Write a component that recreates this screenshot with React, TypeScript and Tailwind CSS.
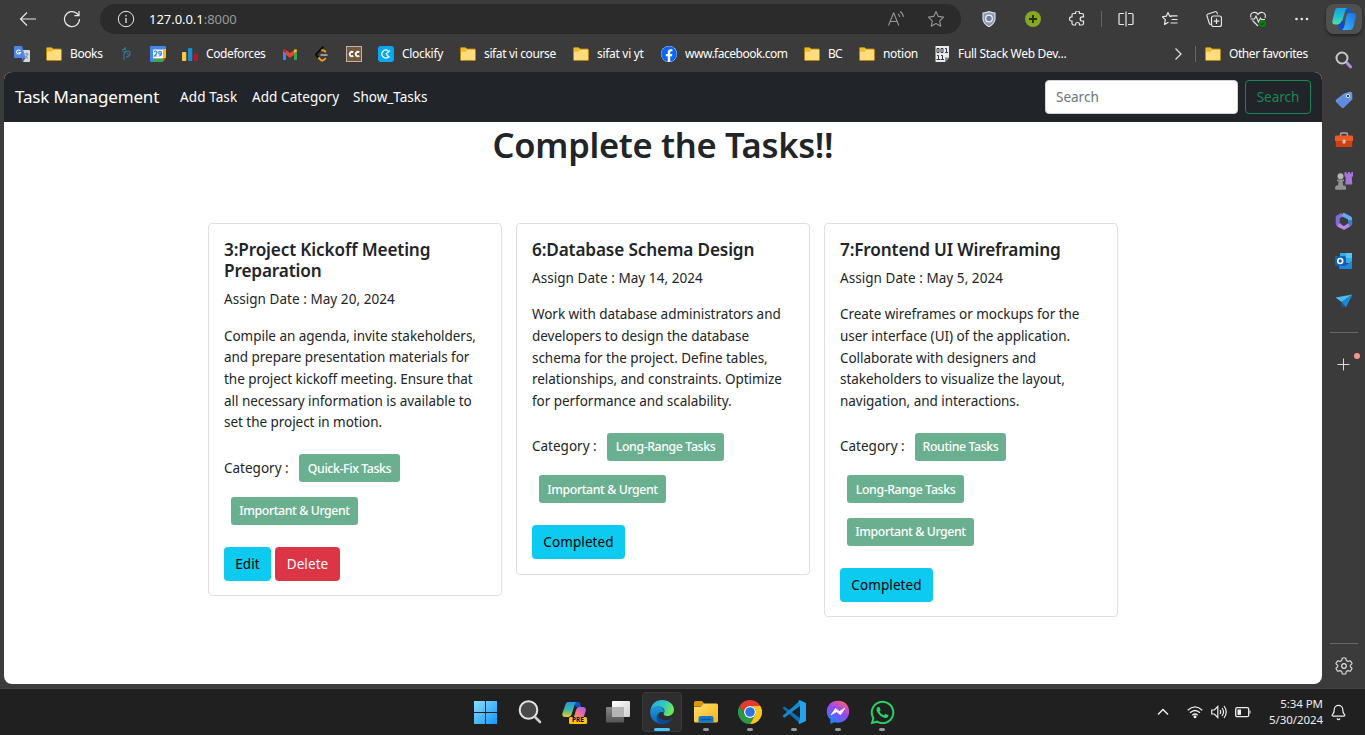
import type { ReactNode } from "react";
import { Bell } from "lucide-react";
import { FaFacebook, FaWhatsapp } from "react-icons/fa";

const Svg = ({ s = 16, v = "0 0 16 16", c = "", children }: { s?: number; v?: string; c?: string; children: ReactNode }) => (
  <svg width={s} height={s} viewBox={v} fill="none" className={`shrink-0 ${c}`}>{children}</svg>
);

/* ---------- bookmark icons ---------- */
const Folder = () => (
  <Svg>
    <path d="M.5 2.500q0-1 1-1h4l1.500 1.500h7.500q1 0 1 1v9.500q0 1-1 1h-13q-1 0-1-1z" fill="#ffdc7c" stroke="#b8860b" />
    <path d="M1 2h4.500l1 1-1.500 1.500H1z" fill="#f3bd22" />
    <path d="M1 5h4.500l1.500-1.500" stroke="#c6951a" strokeWidth=".7" />
  </Svg>
);
const Translate = () => (
  <Svg>
    <path d="M7 4h8q1 0 1 1v10q0 1-1 1H9z" fill="#d5d8dc" />
    <path d="M1 0h7l3.500 12H1q-1 0-1-1V1q0-1 1-1z" fill="#4d86ea" />
    <path d="M8.500 12h3L9 16z" fill="#2f5fc0" />
    <path d="M6.300 5A2 2 0 1 0 6.500 6.500H4.600" stroke="#fff" strokeWidth="1.100" />
    <path d="M10.500 8h4M12.500 7v1M13.800 8.200q-1 3-3 4M11.200 9.500q1 2 3 3" stroke="#78848f" strokeWidth=".9" />
  </Svg>
);
const Phitron = () => (
  <Svg>
    <path d="M4.300 4.500l3-2.500v2M4.500 6h3M6 7.500V14M6 8q2-3 4.500-3Q12.500 5.300 12 8q-.8 2.800-4 3M8 4.500v2M9.700 7v1.500" stroke="#32789a" strokeWidth="1.200" />
  </Svg>
);
const Calendar = () => (
  <Svg>
    <path d="M0 1q0-1 1-1h14q1 0 1 1v3H0z" fill="#4285f4" />
    <path d="M0 3h3v13H1q-1 0-1-1z" fill="#4285f4" />
    <path d="M13 3h3v9h-3z" fill="#fbbc04" />
    <path d="M3 12.500h10V16H3z" fill="#34a853" />
    <path d="M13 12h3l-3 4z" fill="#ea4335" />
    <path d="M3 3.500h10v9H3z" fill="#fff" />
    <path d="M4.200 6.200q.3-1 1.500-1t1.300 1.200q0 .8-2.700 3.600h3" stroke="#4285f4" strokeWidth="1.200" />
    <circle cx="10" cy="6.700" r="1.400" stroke="#4285f4" strokeWidth="1.200" />
    <path d="M11.500 6.500q.4 3.700-2.700 3.500" stroke="#4285f4" strokeWidth="1.200" />
  </Svg>
);
const Codeforces = () => (
  <Svg>
    <rect x="0" y="6" width="4.300" height="9" rx="1" fill="#f6c846" />
    <rect x="6" y="2" width="4.300" height="13" rx="1" fill="#1c8ccd" />
    <rect x="11.800" y="7.500" width="4.200" height="7.500" rx="1" fill="#b8142a" />
  </Svg>
);
const Gmail = () => (
  <Svg>
    <path d="M1 3.500L4 4l4 3.200L12 4l3-.5V7l-7 5-7-5z" fill="#ea4335" />
    <path d="M4 9l4 3 4-3v5H4z" fill="#3b3b3b" />
    <path d="M1 5L4 7.200V14H2q-1 0-1-1z" fill="#4285f4" />
    <path d="M15 5l-3 2.200V14h2q1 0 1-1z" fill="#34a853" />
    <path d="M12 3.800q3-1.800 3 1.200L12 7.200z" fill="#fbbc04" />
    <path d="M4 3.800Q1 2 1 5L4 7.200z" fill="#c5221f" />
  </Svg>
);
const Leetcode = () => (
  <Svg>
    <path d="M9.500.8L2.800 7.500q-1.200 1.200 0 2.500l2 2.200" stroke="#0c0c0c" strokeWidth="2" />
    <path d="M11.800 6L9.800 4.500Q8.600 3.600 7.300 4.800M4.400 11.500l2.500 2.600q1.300 1.100 2.700 0l2.200-2" stroke="#f6a119" strokeWidth="1.900" />
    <path d="M6.500 9h7" stroke="#aaa" strokeWidth="1.700" />
  </Svg>
);
const CodeChef = () => (
  <Svg>
    <rect x=".5" y=".5" width="15" height="15" fill="#76583f" stroke="#c0b2a6" />
    <path d="M7.300 6.300a2.200 2.200 0 1 0 0 3.500M13.300 6.300a2.200 2.200 0 1 0 0 3.500" stroke="#fff" strokeWidth="1.800" />
  </Svg>
);
const Clockify = () => (
  <Svg>
    <rect width="16" height="16" rx="3" fill="#03a9f4" />
    <path d="M10.200 4.700a4 4 0 1 0 0 6.600M8 8l3.700-3.500M8.500 8.500l3 3" stroke="#fff" strokeWidth="1.300" />
  </Svg>
);
const Facebook = () => (
  <span className="flex size-4 items-center justify-center rounded-full bg-white"><FaFacebook size={16} color="#0866ff" /></span>
);
const BinaryDoc = () => (
  <Svg>
    <path d="M1.500 0H15v11.500L11 16H1.500z" fill="#e8eaec" />
    <path d="M11 16v-4.500h4z" fill="#7d8790" />
    <path d="M3 2.500h2v4H3zM7 2.500h2v4H7zM11 2.500h1.500v4M11 6.500h3M3 9.500h1.500v4M2.500 13.500h3.500M7 9.500h1.500v4M6.500 13.500H10" stroke="#343a40" strokeWidth="1" />
  </Svg>
);

const bookmarks: { w: string; icon: ReactNode; label?: string; t?: string }[] = [
  { w: "w-8", icon: <Translate /> },
  { w: "w-[72px]", icon: <Folder />, label: "Books", t: "tracking-[-0.4px]" },
  { w: "w-8", icon: <Phitron /> },
  { w: "w-8", icon: <Calendar /> },
  { w: "w-[100px]", icon: <Codeforces />, label: "Codeforces", t: "tracking-[-0.4px]" },
  { w: "w-8", icon: <Gmail /> },
  { w: "w-8", icon: <Leetcode /> },
  { w: "w-8", icon: <CodeChef /> },
  { w: "w-[82px]", icon: <Clockify />, label: "Clockify" },
  { w: "w-[113px]", icon: <Folder />, label: "sifat vi course", t: "tracking-[-0.37px]" },
  { w: "w-[88px]", icon: <Folder />, label: "sifat vi yt" },
  { w: "w-[143px]", icon: <Facebook />, label: "www.facebook.com", t: "tracking-[-0.48px]" },
  { w: "w-[55px]", icon: <Folder />, label: "BC", t: "tracking-[-0.7px]" },
  { w: "w-[75px]", icon: <Folder />, label: "notion" },
  { w: "w-[150px]", icon: <BinaryDoc />, label: "Full Stack Web Dev..." },
];

/* ---------- browser toolbar ---------- */
const Slot = ({ children, c = "w-11" }: { children: ReactNode; c?: string }) => (
  <div className={`flex shrink-0 items-center justify-center ${c}`}>{children}</div>
);

const CopilotMark = () => (
  <Svg s={24} v="0 0 24 24">
    <defs>
      <linearGradient id="cpA" x1="0" y1="0" x2="0" y2="1"><stop stopColor="#1e9ee0" /><stop offset=".5" stopColor="#20c0d5" /><stop offset="1" stopColor="#59dfa0" /></linearGradient>
      <linearGradient id="cpB" x1="1" y1="0" x2="0" y2="1"><stop stopColor="#1b6fe0" /><stop offset="1" stopColor="#38b8fb" /></linearGradient>
    </defs>
    <path d="M13 1h3q2.500 0 3 3l.6 2h-5z" fill="#1457c9" />
    <path d="M5 1h10q-1.500 1-2.500 5L10.500 13q-1 4.500-4 4.500H3q-3.500 0-2.500-4l2-8.500Q3.500 1 5 1z" fill="url(#cpA)" />
    <path d="M6 17.500q2.800-.5 3.500-3.500l3 0-1 9H9q-2 0-2.500-3z" fill="#1247d0" />
    <path d="M17 6h4q3.500 0 2.700 4l-2 8.500q-1 4.500-4 4.500H10q2-1 2.800-5l1.400-8Q15 6 17 6z" fill="url(#cpB)" />
  </Svg>
);

const Toolbar = () => (
  <div className="flex h-[38px] shrink-0 text-[#e8e8e8]">
    <div className="flex h-[37px] w-[100px] shrink-0 items-center pl-1.5">
      <Slot>
        <Svg s={18} v="0 0 18 18"><path d="M17 9H1.500M8 2.500L1.500 9 8 15.500" stroke="currentColor" strokeWidth="1.200" /></Svg>
      </Slot>
      <Slot>
        <Svg s={18} v="0 0 18 18"><path d="M16.500 9A7.500 7.500 0 1 1 14 3.500l2 2M16 1v4.700h-4.600" stroke="currentColor" strokeWidth="1.200" /></Svg>
      </Slot>
    </div>
    <div className="mt-1 flex h-[30px] w-[861px] shrink-0 items-center rounded-full bg-[#2b2b2b] pl-[17px] pr-[14px]">
      <Svg s={18} v="0 0 18 18"><circle cx="9" cy="9" r="7.700" stroke="currentColor" /><path d="M9 8v5M9 5v1.500" stroke="currentColor" strokeWidth="1.300" /></Svg>
      <span className="ml-3.5 flex-1 text-[13px] leading-5 tracking-[-0.04px] text-[#999]"><span className="text-white">127.0.0.1</span>:8000</span>
      <Svg s={18} v="0 0 18 18" c="mr-[22px] text-[#969696]">
        <path d="M1.500 15.500L6.500 3h.3l5 12.500M3.500 11.500H10M11 4q1.600 1 1.700 3M13 1.500q3 1.500 3.300 5.500" stroke="currentColor" strokeWidth="1.100" />
      </Svg>
      <Svg s={18} v="0 0 18 18" c="mr-[2px] text-[#969696]">
        <path d="M9 1.500l2.300 4.900 5.300.7-3.900 3.700 1 5.400L9 13.600l-4.700 2.600 1-5.400L1.400 7.100l5.300-.7z" stroke="currentColor" strokeWidth="1.100" strokeLinejoin="round" />
      </Svg>
    </div>
    <div className="flex h-[37px] shrink-0 items-center pl-1.5">
      <Slot>
        <Svg><path d="M8 .5Q11 2 14 2v6.500Q13 13 8 15.700 3 13 2 8.500V2Q5 2 8 .5z" fill="#8798b5" stroke="#dfe5ef" strokeWidth="1.100" /><circle cx="8" cy="7.500" r="3.300" fill="#6d7c9b" stroke="#eef2f8" strokeWidth="1.300" /></Svg>
      </Slot>
      <Slot>
        <Svg><circle cx="8" cy="8" r="8" fill="#86a81e" /><path d="M8 4v8M4 8h8" stroke="#27300c" strokeWidth="2" /></Svg>
      </Slot>
      <Slot>
        <Svg><path d="M4.500 2.500h2V2a2 2 0 0 1 4 0v.5h2.500q1.500 0 1.500 1.500v1.800h-1.200a2.100 2.100 0 0 0 0 4.200h1.200v2.500q0 1.500-1.500 1.500h-2.500v-.5a2 2 0 0 0-4 0v.5h-2Q3 14 3 12.500V10h-.5a2.100 2.100 0 0 1 0-4.200H3V4q0-1.500 1.500-1.500z" stroke="currentColor" strokeWidth="1.200" /></Svg>
      </Slot>
      <div className="ml-[2px] h-4 w-px bg-[#666]" />
      <Slot c="ml-[2px] w-11">
        <Svg><path d="M6 2.500H2q-1 0-1 1v9q0 1 1 1h4M10 2.500h4q1 0 1 1v9q0 1-1 1h-4M8 .5v15" stroke="currentColor" strokeWidth="1.200" /></Svg>
      </Slot>
      <Slot>
        <Svg><path d="M9.500 5.600L7.700 5.200 6 1.500 4.300 5.200l-4 .6 3 2.800-.8 4.800L6.500 11.200M8.500 4.800h7M9.500 8.500h6M8.500 12h7" stroke="currentColor" strokeWidth="1.200" strokeLinejoin="round" /></Svg>
      </Slot>
      <Slot>
        <Svg><path d="M5.500 13.500L3.500 13 1 5Q.6 3.500 2 3L9 .7q1.500-.5 2 1l.5 1.600" stroke="currentColor" strokeWidth="1.100" /><rect x="5.500" y="5" width="10" height="10.500" rx="2" stroke="currentColor" strokeWidth="1.200" /><path d="M10.500 7.500v5.500M7.700 10.200h5.600" stroke="currentColor" strokeWidth="1.200" /></Svg>
      </Slot>
      <Slot>
        <Svg><path d="M1 6.500Q-.3 2.300 3.500 1.500 6.500 1 8 3.500 9.500 1 12.500 1.500 16.300 2.300 15 7M2.500 9.500L8 15M.5 8h4L6 5l2.500 6 2-4 1 1.500H15" stroke="currentColor" strokeWidth="1.100" /><circle cx="12.500" cy="12.500" r="3.500" fill="#107c10" /><path d="M10.800 12.600l1.300 1.200 2-2.400" stroke="#063a06" strokeWidth=".9" /></Svg>
      </Slot>
      <Slot>
        <Svg><circle cx="2.500" cy="8" r="1.300" fill="currentColor" /><circle cx="7.800" cy="8" r="1.300" fill="currentColor" /><circle cx="13" cy="8" r="1.300" fill="currentColor" /></Svg>
      </Slot>
    </div>
  </div>
);

const Bookmarks = () => (
  <div className="flex h-[34px] shrink-0 items-center pb-[2px] pl-3.5 text-[12px] leading-4 tracking-[-0.3px] text-white">
    {bookmarks.map((b, i) => (
      <div key={i} className={`flex shrink-0 items-center gap-2 whitespace-nowrap ${b.w}`}>
        {b.icon}
        {b.label && <span className={b.t ?? ""}>{b.label}</span>}
      </div>
    ))}
    <div className="flex w-[111px] shrink-0 justify-end pr-[9px]">
      <Svg s={16}><path d="M5.500 2.500L11 8l-5.500 5.500" stroke="#ddd" strokeWidth="1.300" /></Svg>
    </div>
    <div className="h-4 w-px shrink-0 bg-[#666]" />
    <div className="flex shrink-0 items-center gap-2 whitespace-nowrap pl-[9px]"><Folder /><span className="tracking-[-0.42px]">Other favorites</span></div>
  </div>
);

/* ---------- side rail ---------- */
const rail: ReactNode[] = [
  <Svg s={18} v="0 0 18 18"><path d="M12 12l3.500 3.800" stroke="#b98be8" strokeWidth="3" strokeLinecap="round" /><circle cx="7" cy="7" r="5.500" stroke="#c9c9c9" strokeWidth="2" /></Svg>,
  <Svg s={18} v="0 0 18 18"><path d="M9 2.500L15 .8q2-.3 2.200 1.500l.2 6L9 16.500q-1.200 1-2.400 0l-5.500-5.400q-1-1.200 0-2.400z" fill="#6a96e4" /><path d="M1.500 11.500L9 4l6 5-6 7.500q-1.200 1-2.400 0z" fill="#5580d8" opacity=".5" /><circle cx="13" cy="5" r="1.700" fill="#333b4c" stroke="#dce8ff" /></Svg>,
  <Svg s={18} v="0 0 18 18"><path d="M5.500 5V3.500Q5.500 2 7 2h4q1.500 0 1.500 1.500V5" stroke="#a9a9a9" strokeWidth="1.500" /><path d="M0 5.500q0-1 1-1h16q1 0 1 1V10H0z" fill="#f05a25" /><path d="M.8 10h16.400v5q0 1-1 1H1.800q-1 0-1-1z" fill="#d0400f" /><rect x="7.500" y="8.500" width="3" height="4" rx="1" fill="#d0c9c6" /></Svg>,
  <Svg s={18} v="0 0 18 18"><path d="M9.500 0h2v1.500H13V0h2v1.500h1.300V0H18v4l-1.200 1.500.5 7h-7l.5-7L9.500 4z" fill="#a873dc" /><circle cx="5.500" cy="4.300" r="3" fill="#b5b5b5" /><path d="M2 7.500h7v1.700H7.600l.6 4.300h2q2 4 0 4.200H1q-2-.3 0-4.200h2l.6-4.300H2z" fill="#929292" /></Svg>,
  <Svg s={18} v="0 0 18 18">
    <path d="M7.500 2.500L2.700 5.300V12L6 14" stroke="#7f6ad8" strokeWidth="4" strokeLinejoin="round" />
    <path d="M7.500 2.300l7.500 4V9" stroke="#68a8ee" strokeWidth="4" strokeLinejoin="round" />
    <path d="M15.300 8v4l-2 1.500" stroke="#4479d2" strokeWidth="4" strokeLinejoin="round" />
    <path d="M3 13l6 3 5-3" stroke="#ba86e8" strokeWidth="3.600" strokeLinejoin="round" />
  </Svg>,
  <Svg s={18} v="0 0 18 18"><path d="M5 1h11q1 0 1 1v9H5z" fill="#38a9e8" /><path d="M5 5h6v6H5z" fill="#0f66b5" /><path d="M11 1h6v5h-6z" fill="#54c7f5" /><path d="M4 9l7 4 6-4v7q0 1-1 1H5q-1 0-1-1z" fill="#1b87dc" /><rect x="0" y="4" width="10.500" height="10" rx="1" fill="#0b63b8" /><circle cx="5.200" cy="9" r="2.500" stroke="#fff" strokeWidth="1.500" /></Svg>,
  <Svg s={18} v="0 0 18 18"><path d="M.5 5.500L17.500 2.500 6.500 10z" fill="#49bdf2" /><path d="M17.500 2.500L11 15.500 6.500 10z" fill="#188ad8" /><path d="M6.500 10L7 15.500 9.500 13z" fill="#0b63b0" /></Svg>,
];

const Gear = () => (
  <Svg s={18} v="0 0 18 18">
    <path d="M7.300 1h3.400l.6 2.500 1.600.9 2.500-.7 1.700 2.900L15.300 8.400v1.200l1.800 1.800-1.700 2.900-2.500-.7-1.600.9-.6 2.500H7.300l-.6-2.500-1.600-.9-2.500.7-1.700-2.900 1.800-1.800V8.400L.9 6.600l1.700-2.900 2.500.7 1.600-.9z" stroke="#ddd" strokeWidth="1.100" strokeLinejoin="round" />
    <circle cx="9" cy="9" r="2.300" stroke="#ddd" strokeWidth="1.200" />
  </Svg>
);

const Rail = () => (
  <div className="flex w-[43px] shrink-0 flex-col items-center pt-1">
    <div className="flex h-[30px] w-9 shrink-0 items-center justify-center rounded-lg bg-[#505050] shadow-[0_2px_3px_#222]"><CopilotMark /></div>
    <div className="mt-1.5 flex flex-col">
      {rail.map((r, i) => <div key={i} className="flex h-[40.200px] w-[43px] items-center justify-center pl-px">{r}</div>)}
    </div>
    <div className="mt-[10.600px] h-px w-7 bg-[#666]" />
    <div className="relative mt-[22px] flex h-5 w-7 items-center justify-center">
      <Svg><path d="M7.500 1.500v12M1.500 7.500h12" stroke="#ddd" /></Svg>
      <span className="absolute -right-[2px] -top-[2px] size-1.5 rounded-full bg-[#f4978e]" />
    </div>
    <div className="flex-1" />
    <div className="h-px w-7 bg-[#666]" />
    <div className="mb-[13px] mt-[13px]"><Gear /></div>
  </div>
);

/* ---------- task page ---------- */
type Task = { title: string[]; date: string; body: string[]; rows: { label: string; w: string }[]; done: boolean };
const quick = { label: "Quick-Fix Tasks", w: "w-[101px]" };
const long = { label: "Long-Range Tasks", w: "w-[117px]" };
const routine = { label: "Routine Tasks", w: "w-[91px]" };
const urgent = { label: "Important & Urgent", w: "w-[127px]" };

const tasks: Task[] = [
  {
    title: ["3:Project Kickoff Meeting", "Preparation"],
    date: "May 20, 2024",
    body: ["Compile an agenda, invite stakeholders,", "and prepare presentation materials for", "the project kickoff meeting. Ensure that", "all necessary information is available to", "set the project in motion."],
    rows: [quick, urgent],
    done: false,
  },
  {
    title: ["6:Database Schema Design"],
    date: "May 14, 2024",
    body: ["Work with database administrators and", "developers to design the database", "schema for the project. Define tables,", "relationships, and constraints. Optimize", "for performance and scalability."],
    rows: [long, urgent],
    done: true,
  },
  {
    title: ["7:Frontend UI Wireframing"],
    date: "May 5, 2024",
    body: ["Create wireframes or mockups for the", "user interface (UI) of the application.", "Collaborate with designers and", "stakeholders to visualize the layout,", "navigation, and interactions."],
    rows: [routine, long, urgent],
    done: true,
  },
];

const Btn = ({ c, children }: { c: string; children: ReactNode }) => (
  <button className={`flex h-[34px] items-center justify-center rounded-[4px] text-[13.500px] tracking-[0.1px] ${c}`}>{children}</button>
);

const Card = ({ t }: { t: Task }) => (
  <article className="w-[294px] rounded-[4px] border border-[#dfdfdf] bg-white px-[15px] pb-[14.300px] pt-[15px]">
    <h5 className="text-[17.200px] font-[560] leading-[21.400px] tracking-[-0.15px]">
      {t.title.map((l) => <span key={l} className="block whitespace-nowrap">{l}</span>)}
    </h5>
    <p className="mt-[7.500px] text-[13.500px] leading-[21.600px] tracking-[0.05px]">Assign Date : {t.date}</p>
    <p className="mt-[14.900px] text-[13.500px] leading-[21.600px] tracking-[-0.040px]">
      {t.body.map((l) => <span key={l} className="block whitespace-nowrap">{l}</span>)}
    </p>
    <div className="mt-[20.700px] flex flex-col gap-[14.300px]">
      {t.rows.map((r, i) => (
        <div key={r.label} className="flex h-7 items-center">
          {i === 0 && <span className="w-[68px] whitespace-nowrap pb-[1px] text-[13.500px]">Category :</span>}
          <span className={`ml-[7px] flex h-7 items-center justify-center whitespace-nowrap rounded-[3px] bg-[#6ab090] pt-px text-[12.300px] font-medium tracking-[-0.38px] text-white ${r.w}`}>{r.label}</span>
        </div>
      ))}
    </div>
    <div className="mt-[22px] flex gap-1">
      {t.done ? (
        <Btn c="w-[93px] bg-[#0dcaf0] text-black">Completed</Btn>
      ) : (
        <>
          <Btn c="w-[47px] bg-[#0dcaf0] text-black">Edit</Btn>
          <Btn c="w-[65px] bg-[#dc3545] text-white">Delete</Btn>
        </>
      )}
    </div>
  </article>
);

const TaskPage = () => (
  <main className="ml-1 h-[612px] shrink-0 overflow-hidden rounded-lg bg-white text-[#212529]">
    <nav className="flex h-[50px] items-center bg-[#212529] pl-[11px] pr-[11px] text-white">
      <span className="w-[165px] whitespace-nowrap text-[17px] tracking-[-0.15px]">Task Management</span>
      <span className="w-[72px] whitespace-nowrap text-[13.500px] tracking-[0.100px]">Add Task</span>
      <span className="w-[101px] whitespace-nowrap text-[13.500px] tracking-[0.080px]">Add Category</span>
      <span className="flex-1 whitespace-nowrap text-[13.500px]">Show_Tasks</span>
      <input placeholder="Search" className="h-[34px] w-[193px] rounded-[4px] border border-[#ced4da] bg-white px-2.5 text-[13.500px] placeholder:text-[#6c757d]" />
      <button className="ml-[7px] h-[34px] w-[66px] rounded-[4px] border border-[#198754] text-[13.500px] text-[#198754]">Search</button>
    </nav>
    <h1 className="h-[101px] whitespace-nowrap pt-[1px] text-center text-[34.500px] font-[560] leading-[44px] tracking-[-0.3px]">Complete the Tasks!!</h1>
    <div className="flex items-start gap-3.5 pl-[204px]">
      {tasks.map((t) => <Card key={t.title[0]} t={t} />)}
    </div>
  </main>
);

/* ---------- taskbar ---------- */
const WindowsLogo = () => (
  <Svg s={24} v="0 0 24 24">
    <defs><linearGradient id="win" x1="0" y1="0" x2="24" y2="24" gradientUnits="userSpaceOnUse"><stop stopColor="#8be0fb" /><stop offset="1" stopColor="#0f94f5" /></linearGradient></defs>
    <path d="M0 1h11v11H0zM12 1h11v11H12zM0 13h11v11H0zM12 13h11v11H12z" fill="url(#win)" />
  </Svg>
);
const SearchGlyph = () => (
  <Svg s={24} v="0 0 24 24"><circle cx="10.500" cy="10" r="8.800" fill="#4a4a4a" stroke="#e4e4e4" strokeWidth="2" /><path d="M17 17l5 5" stroke="#cfcfcf" strokeWidth="2.600" strokeLinecap="round" /></Svg>
);
const CopilotPre = () => (
  <div className="relative size-6">
    <Svg s={24} v="0 0 24 24">
      <defs>
        <linearGradient id="pa" x1="0" y1="0" x2="0" y2="1"><stop stopColor="#2796ea" /><stop offset=".5" stopColor="#37b9a5" /><stop offset="1" stopColor="#f1cc2a" /></linearGradient>
        <linearGradient id="pb" x1="1" y1="0" x2="0" y2="1"><stop stopColor="#a25bf0" /><stop offset=".6" stopColor="#ef6f98" /><stop offset="1" stopColor="#f79b52" /></linearGradient>
      </defs>
      <path d="M11 2h5q2.500 0 3 5h-5z" fill="#174fc4" />
      <path d="M6 2h8q-1 1-2 5l-2 6q-1 4-4 4H3q-3.500 0-2.500-4L3 6q1-4 3-4z" fill="url(#pa)" />
      <path d="M17 7h4q3.500 0 2.700 4l-2 6H12l2-7Q15 7 17 7z" fill="url(#pb)" />
    </Svg>
    <span className="absolute -right-px bottom-0 flex h-[7px] w-[18px] items-center justify-center rounded-[1.500px] bg-[#fcc40c] text-[6.500px] font-bold leading-none text-black">PRE</span>
  </div>
);
const TaskView = () => (
  <Svg s={24} v="0 0 24 24">
    <defs>
      <linearGradient id="tv" x1="0" y1="0" x2="1" y2="1"><stop stopColor="#fff" /><stop offset="1" stopColor="#cfcfcf" /></linearGradient>
      <linearGradient id="tw" x1="0" y1="0" x2="0" y2="1"><stop stopColor="#858585" /><stop offset="1" stopColor="#555" /></linearGradient>
    </defs>
    <rect x="6" y="1" width="18" height="16" rx="1" fill="url(#tv)" /><rect x="0" y="7" width="18" height="15.500" rx="1" fill="url(#tw)" /><path d="M6 7h12v10H6z" fill="#b5b5b5" />
  </Svg>
);
const Edge = () => (
  <Svg s={24} v="0 0 24 24">
    <defs>
      <linearGradient id="e1" x1="0" y1="0" x2="1" y2=".3"><stop stopColor="#2ca6e8" /><stop offset=".6" stopColor="#31c8c4" /><stop offset="1" stopColor="#70e65b" /></linearGradient>
      <linearGradient id="e2" x1="0" y1="0" x2="0" y2="1"><stop stopColor="#219bdc" /><stop offset="1" stopColor="#0d62b8" /></linearGradient>
    </defs>
    <path d="M.3 10.500C1.500 4 6 0 12 0c7 0 12 4.500 12 9.500 0 4-3 6.500-6.500 6.500-3 0-4.500-1.300-3.500-3 2-4-2-7-6-6.500-4 .3-6.500 2-7.700 4z" fill="url(#e1)" />
    <path d="M.1 12C.5 8 4 6 8 6.200c4 .1 7 3.300 5.500 6.600-2-2-6 0-5.500 4 .3 3.200 3 6 6.500 6.900C7 25 .1 20 .1 12z" fill="url(#e2)" />
    <path d="M9.500 11.500c-3 3-.5 8.500 5.500 8.700 3 .1 5-.7 7.200-2-2 4-6 6-10 5.800-5-.5-8.200-6.500-2.700-12.500z" fill="#0c4a93" />
  </Svg>
);
const Explorer = () => (
  <Svg s={24} v="0 0 24 24">
    <defs><linearGradient id="fx" x1="0" y1="0" x2="1" y2="1"><stop stopColor="#ffdd70" /><stop offset="1" stopColor="#f9b719" /></linearGradient></defs>
    <path d="M0 2.500Q0 1 1.500 1H8l2.500 3L8 6H0z" fill="#dc9708" />
    <path d="M0 6.500h7L10 3.500h12.500q1.500 0 1.500 1.500v16q0 1.500-1.500 1.500h-21Q0 22.500 0 21z" fill="url(#fx)" />
    <path d="M4.500 22.500V18q0-2 2-2h11q2 0 2 2v4.500z" fill="#1379ce" /><path d="M7 19.500h10" stroke="#0b559d" strokeWidth="1.200" />
  </Svg>
);
const Chrome = () => (
  <Svg s={24} v="0 0 24 24">
    <path d="M1.600 6A12 12 0 0 1 22.400 6H12a6 6 0 0 0-5.200 9z" fill="#e33b2e" />
    <path d="M1.600 6A12 12 0 0 0 12 24l5.200-9a6 6 0 0 1-10.400 0z" fill="#2a9a48" />
    <path d="M22.400 6A12 12 0 0 1 12 24l5.200-9A6 6 0 0 0 12 6z" fill="#fbc716" />
    <circle cx="12" cy="12" r="6" fill="#fff" /><circle cx="12" cy="12" r="4.800" fill="#2f73e0" />
  </Svg>
);
const VsCode = () => (
  <Svg s={24} v="0 0 24 24">
    <path d="M.5 8l1.800-1.600L18 18v5.500z" fill="#0f6fb5" /><path d="M.5 16l1.800 1.700L18 6V.5z" fill="#168ad0" />
    <path d="M17.500 0L24 3v18l-6.500 3-1-1 1.500-4V5l-1.500-4z" fill="#23a3ee" />
  </Svg>
);
const Messenger = () => (
  <Svg s={24} v="0 0 24 24">
    <defs><linearGradient id="ms" x1=".2" y1="1" x2=".8" y2="0"><stop stopColor="#1389fc" /><stop offset=".55" stopColor="#9a45f5" /><stop offset="1" stopColor="#fb6370" /></linearGradient></defs>
    <path d="M12 .8C5.300.8.800 5.500.8 11.500c0 3.200 1.300 6 3.500 7.900v3.600q.2.900 1.200.6l2.900-1.300c7 2 14.800-2.800 14.800-10.800C23.200 5.500 18.700.8 12 .8z" fill="url(#ms)" />
    <path d="M5 15l4.500-6.500 4 3L19 8l-4.500 6.700-4-3z" fill="#fff" stroke="#fff" strokeLinejoin="round" strokeWidth=".7" />
  </Svg>
);

const apps: { icon: ReactNode; mark: "none" | "dot" | "active" }[] = [
  { icon: <WindowsLogo />, mark: "none" },
  { icon: <SearchGlyph />, mark: "none" },
  { icon: <CopilotPre />, mark: "none" },
  { icon: <TaskView />, mark: "none" },
  { icon: <Edge />, mark: "active" },
  { icon: <Explorer />, mark: "dot" },
  { icon: <Chrome />, mark: "dot" },
  { icon: <VsCode />, mark: "dot" },
  { icon: <Messenger />, mark: "dot" },
  { icon: <FaWhatsapp size={27} color="#25d366" />, mark: "dot" },
];

const Taskbar = () => (
  <footer className="flex h-[47px] shrink-0 border-t border-[#424242] bg-[#202020] text-[#eee]">
    <div className="flex gap-1 pl-[466px] pt-[3px]">
      {apps.map((a, i) => (
        <div key={i} className={`flex h-10 w-10 flex-col items-center rounded-[4px] ${a.mark === "active" ? "bg-[#2e2e2e] outline outline-[#383838] -outline-offset-1" : ""}`}>
          <div className="flex h-[37px] items-center justify-center pt-[3px]">{a.icon}</div>
          {a.mark === "active" && <div className="-mt-[1px] h-[3px] w-4 shrink-0 rounded-full bg-[#4cc2ff]" />}
          {a.mark === "dot" && <div className="-mt-[1px] h-[3px] w-1.5 shrink-0 rounded-full bg-[#999]" />}
        </div>
      ))}
    </div>
    <div className="ml-auto flex items-center pr-[18px]">
      <Svg s={12} v="0 0 12 12" c="mr-[18px]"><path d="M1 8.500l5-5 5 5" stroke="currentColor" strokeWidth="1.500" /></Svg>
      <Svg c="mr-2"><path d="M.7 6.300Q8-.5 15.300 6.300M3 8.800q5-4.600 10 0M5.300 11.200q2.700-2.400 5.400 0" stroke="currentColor" strokeWidth="1.300" /><circle cx="8" cy="12.800" r="1.500" fill="currentColor" /></Svg>
      <Svg c="mr-2"><path d="M.7 6h2.600l3.500-3.500v11L3.300 10H.7zM9 6q1.300 2 0 4M11 4q3 4 0 8M13 2q4.500 6 0 12" stroke="currentColor" strokeWidth="1.200" /></Svg>
      <Svg c="mr-4"><rect x=".7" y="3.700" width="13" height="9" rx="1.500" stroke="currentColor" strokeWidth="1.300" /><path d="M2.500 5.500H6v5.400H2.500z" fill="currentColor" /><path d="M14.500 6.500h1v3h-1z" fill="currentColor" /></Svg>
      <div className="w-[56px] whitespace-nowrap text-right text-[11.500px] leading-4 tracking-[-0.060px]"><span className="flex justify-end">5:34 PM</span><span className="flex justify-end">5/30/2024</span></div>
      <Bell size={17} strokeWidth={1.700} className="ml-[7px]" />
    </div>
  </footer>
);

export default function App() {
  return (
    <div className="flex h-[735px] w-[1365px] flex-col overflow-hidden bg-[#3b3b3b] font-['Noto_Sans',sans-serif]">
      <div className="flex h-[688px] shrink-0">
        <div className="flex w-[1322px] shrink-0 flex-col">
          <Toolbar />
          <Bookmarks />
          <TaskPage />
        </div>
        <Rail />
      </div>
      <Taskbar />
    </div>
  );
}
